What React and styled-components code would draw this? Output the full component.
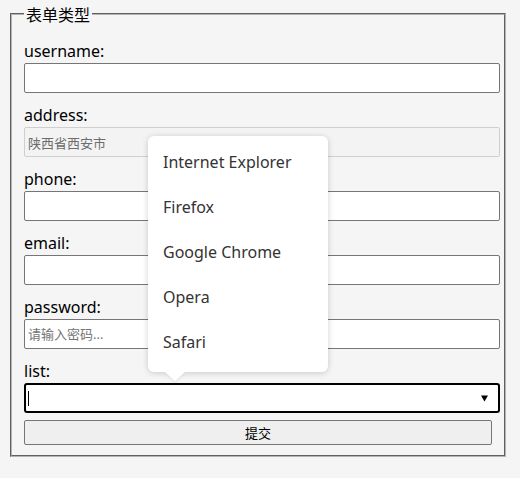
import React from 'react';
import styled, { createGlobalStyle } from 'styled-components';

const GlobalStyle = createGlobalStyle`
  html, body {
    margin: 0;
    padding: 0;
    background: #f5f5f5;
  }
  body {
    font-family: "Noto Sans", "Noto Sans CJK SC", sans-serif;
    color: #000;
  }
`;

const Page = styled.div`
  width: 520px;
  height: 478px;
  padding: 4px 14px 0 10px;
  box-sizing: border-box;
`;

const FormSet = styled.fieldset`
  margin: 0;
  padding: 0 12px 10px 12px;
  border: 2px groove #b4b4b4;
  min-width: 0;
`;

const Legend = styled.legend`
  padding: 0 2px;
  font-size: 16px;
  line-height: 20px;
  font-family: "Noto Sans CJK SC", sans-serif;
`;

const Fields = styled.div`
  display: flex;
  flex-direction: column;
  padding-top: 17px;
`;

const Field = styled.div`
  position: relative;
  display: flex;
  flex-direction: column;
  gap: 2px;
  margin-top: ${(p) => (p.$first ? 0 : 12)}px;
`;

const Label = styled.label`
  font-size: 16px;
  line-height: 20px;
`;

const TextInput = styled.input`
  width: calc(100% + 8px);
  height: 30px;
  box-sizing: border-box;
  margin: 0;
  padding: 0 3px;
  border: 1px solid;
  border-radius: 2px;
  background: ${(p) => (p.disabled ? '#f3f3f3' : '#fff')};
  border-color: ${(p) => (p.disabled ? '#cfcfcf' : '#767676')};
  color: ${(p) => (p.disabled ? '#6d6d6d' : '#000')};
  font-size: 13px;
  font-family: "Noto Sans", "Noto Sans CJK SC", sans-serif;
  outline: none;

  &::placeholder {
    color: #757575;
  }
`;

const ListBox = styled.div`
  width: calc(100% + 8px);
  height: 30px;
  box-sizing: border-box;
  padding: 0 10px 0 2px;
  border: 2px solid #000;
  border-radius: 3px;
  background: #fff;
  display: flex;
  align-items: center;
  justify-content: space-between;
`;

const Cursor = styled.span`
  width: 1px;
  height: 15px;
  background: #000;
`;

const Caret = styled.svg`
  width: 7px;
  height: 7px;
`;

const SubmitButton = styled.button`
  margin-top: 7px;
  width: 100%;
  height: 25px;
  border: 1px solid #767676;
  border-radius: 2px;
  background: #efefef;
  font-size: 13px;
  font-family: "Noto Sans CJK SC", sans-serif;
  color: #000;
  padding: 0;
`;

const Popup = styled.ul`
  position: absolute;
  left: 124px;
  bottom: 41px;
  width: 180px;
  margin: 0;
  padding: 4px 0 7px;
  list-style: none;
  background: #fff;
  border-radius: 6px;
  box-shadow: 0 1px 6px rgba(0, 0, 0, 0.18);
  z-index: 2;

  &::after {
    content: '';
    position: absolute;
    left: 17px;
    bottom: -9px;
    border-left: 10px solid transparent;
    border-right: 10px solid transparent;
    border-top: 9px solid #fff;
    filter: drop-shadow(0 2px 1px rgba(0, 0, 0, 0.06));
  }
`;

const Option = styled.li`
  height: 45px;
  line-height: 45px;
  padding-left: 15px;
  font-size: 16px;
  color: #333;
`;

const browsers = ['Internet Explorer', 'Firefox', 'Google Chrome', 'Opera', 'Safari'];

const App = () => {
  return (
    <Page>
      <GlobalStyle />
      <FormSet>
        <Legend>表单类型</Legend>
        <Fields>
          <Field $first>
            <Label>username:</Label>
            <TextInput type="text" />
          </Field>
          <Field>
            <Label>address:</Label>
            <TextInput type="text" value="陕西省西安市" disabled readOnly />
          </Field>
          <Field>
            <Label>phone:</Label>
            <TextInput type="text" />
          </Field>
          <Field>
            <Label>email:</Label>
            <TextInput type="text" />
          </Field>
          <Field>
            <Label>password:</Label>
            <TextInput type="password" placeholder="请输入密码..." />
          </Field>
          <Field>
            <Label>list:</Label>
            <ListBox>
              <Cursor />
              <Caret viewBox="0 0 7 7">
                <path d="M0 0.5 H7 L3.5 6.5 Z" fill="#000" />
              </Caret>
            </ListBox>
            <Popup>
              {browsers.map((b) => (
                <Option key={b}>{b}</Option>
              ))}
            </Popup>
          </Field>
          <SubmitButton type="button">提交</SubmitButton>
        </Fields>
      </FormSet>
    </Page>
  );
};

export default App;
